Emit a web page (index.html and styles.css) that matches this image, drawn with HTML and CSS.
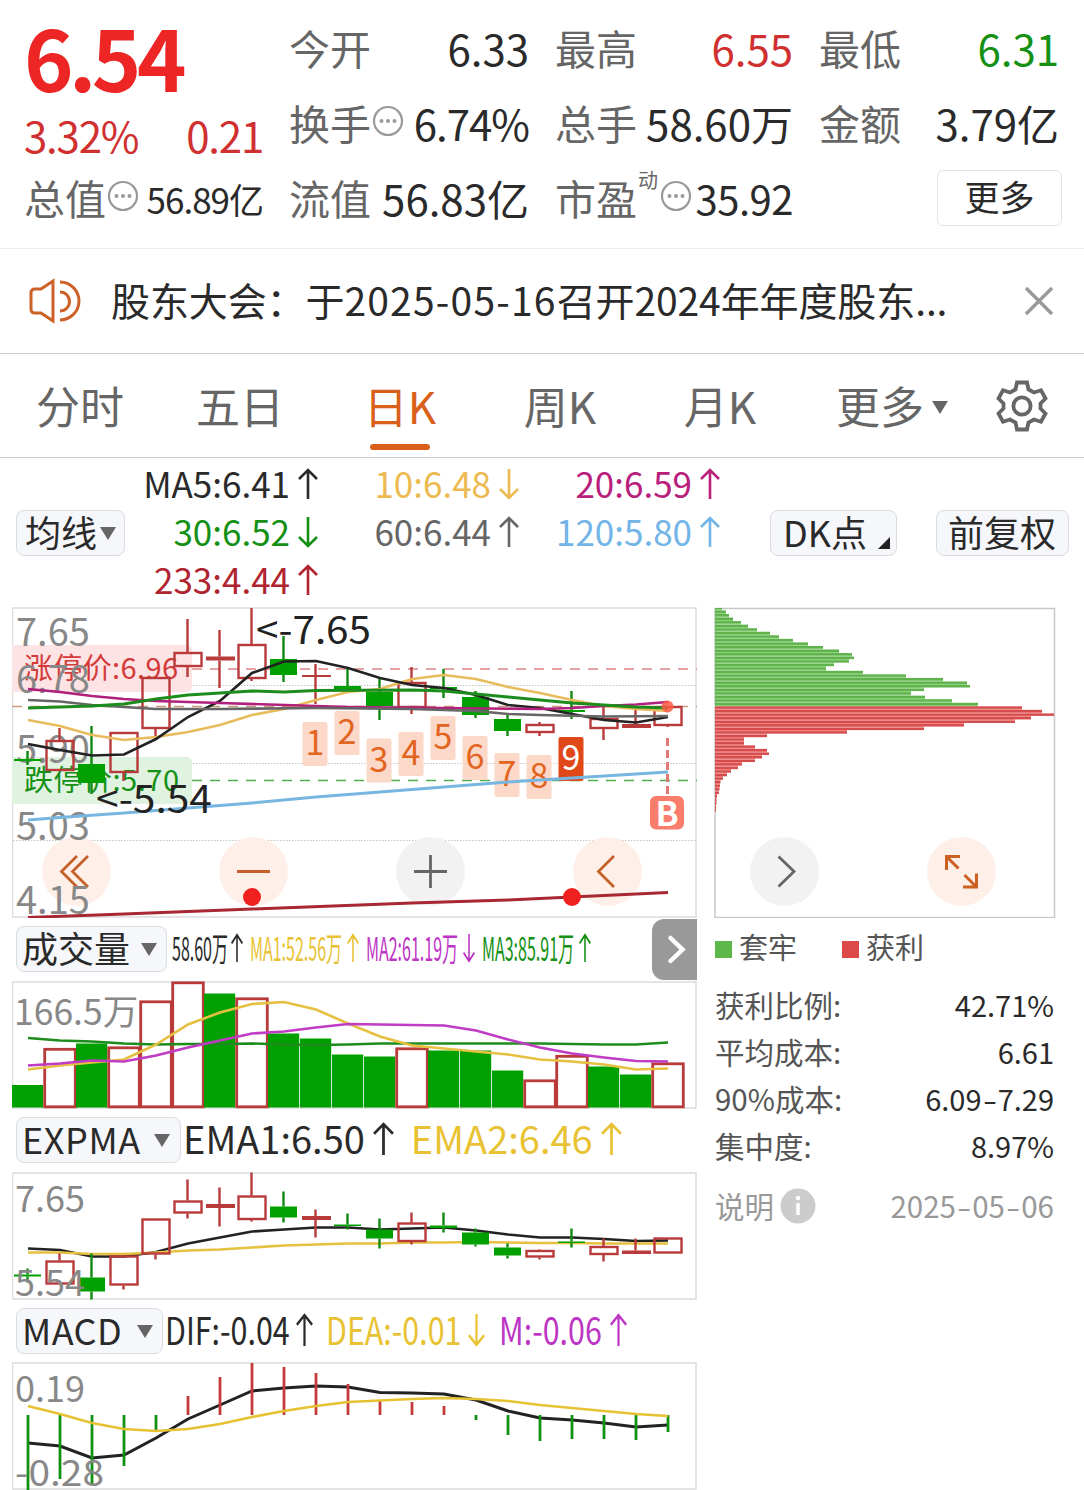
FILE: index.html
```html
<!DOCTYPE html>
<html lang="zh-CN">
<head>
    <meta charset="UTF-8"/>
    <meta name="viewport" content="width=device-width, initial-scale=1.0"/>
    <title>个股行情</title>
    <link rel="stylesheet" href="styles.css">
</head>
<body>
<!--公用图标-->
<svg class="defs">
    <symbol id="dots" viewBox="0 0 32 32">
        <circle cx="16" cy="16" r="14" fill="none" stroke="#999" stroke-width="2.2"/>
        <g fill="#999">
            <circle cx="9.5" cy="16" r="2"/>
            <circle cx="16" cy="16" r="2"/>
            <circle cx="22.5" cy="16" r="2"/>
        </g>
    </symbol>
    <symbol id="up" viewBox="0 0 20 32" preserveAspectRatio="none">
        <path d="M10 31V2M1 11l9-9 9 9" fill="none" stroke="currentColor" stroke-width="2.6"/>
    </symbol>
    <symbol id="down" viewBox="0 0 20 32" preserveAspectRatio="none">
        <path d="M10 1v29M1 21l9 9 9-9" fill="none" stroke="currentColor" stroke-width="2.6"/>
    </symbol>
</svg>

<div class="quote">
    <div class="price">
        <div class="now">6.54</div>
        <div class="change"><span>3.32%</span><span>0.21</span></div>
    </div>
    <div class="item"><label>今开</label><b>6.33</b></div>
    <div class="item"><label>最高</label><b class="red">6.55</b></div>
    <div class="item"><label>最低</label><b class="green">6.31</b></div>
    <div class="item"><label>换手</label><svg class="dots"><use href="#dots"/></svg><b class="rate">6.74%</b></div>
    <div class="item"><label>总手</label><b>58.60万</b></div>
    <div class="item"><label>金额</label><b>3.79亿</b></div>
    <div class="item"><label>总值</label><svg class="dots"><use href="#dots"/></svg><b class="small">56.89亿</b></div>
    <div class="item"><label>流值</label><b>56.83亿</b></div>
    <div class="item"><label>市盈<sup>动</sup></label><svg class="dots pe"><use href="#dots"/></svg><b class="mid">35.92</b></div>
    <div class="item"><a href="javascript:;" class="more">更多</a></div>
</div>

<div class="notice">
    <svg class="horn" viewBox="0 0 52 46">
        <g fill="none" stroke="#cc6228" stroke-width="3">
            <path d="M2 15q0-4 4-4h6L24 3v40L12 35H6q-4 0-4-4z"/>
            <path d="M31 14a9.5 9.5 0 0 1 0 19M31 4a19 19 0 0 1 0 38"/>
        </g>
    </svg>
    <p>股东大会：<span>于<i>2025-05-16</i>召开2024年年度股东...</span></p>
    <svg class="close" viewBox="0 0 30 30">
        <path d="M2 2l26 26M28 2L2 28" stroke="#999" stroke-width="3.4"/>
    </svg>
</div>

<div class="tabs">
    <a>分时</a>
    <a>五日</a>
    <a class="cur">日K</a>
    <a>周K</a>
    <a>月K</a>
    <a class="moreTab">更多<i class="tri"></i></a>
    <svg class="gear" viewBox="0 0 52 52">
        <g fill="none" stroke="#666" stroke-width="3.8">
            <path d="M21 2.500h10l1.500 7 5.500 3 7-2.200 4.500 8.200-5 5v5l5 5-4.500 8.200-7-2.200-5.500 3-1.500 7h-10l-1.500-7-5.500-3-7 2.200-4.500-8.200 5-5v-5l-5-5 4.500-8.200 7 2.200 5.500-3z"/>
            <circle cx="26" cy="26" r="8.6"/>
        </g>
    </svg>
</div>

<div class="average">
    <a class="btn">均线<i class="tri"></i></a>
    <div class="mas">
        <span class="c5">MA5:6.41<svg><use href="#up"/></svg></span>
        <span class="c10">10:6.48<svg><use href="#down"/></svg></span>
        <span class="c20">20:6.59<svg><use href="#up"/></svg></span>
        <span class="c30">30:6.52<svg><use href="#down"/></svg></span>
        <span class="c60">60:6.44<svg><use href="#up"/></svg></span>
        <span class="c120">120:5.80<svg><use href="#up"/></svg></span>
        <span class="c233">233:4.44<svg><use href="#up"/></svg></span>
    </div>
    <a class="btn dk">DK点<i class="corner"></i></a>
    <a class="btn">前复权</a>
</div>

<div class="main">
    <div class="left">
        <svg class="chart kline" viewBox="12 607 685 311">
            <rect x="12.5" y="608" width="683.5" height="309" class="frame"/>
            <path d="M13 685.5H696M13 763.5H696M13 840.5H696" class="dotted"/>
            <path d="M12 645H186q6 0 6 6V686q0 6-6 6H12z" fill="#fde3e3"/>
            <path d="M12 757H186q6 0 6 6V798q0 6-6 6H12z" fill="#e0f2e0"/>
            <path d="M192 669H697" class="dash" stroke="#e08585"/>
            <path d="M12 706.5H697" class="dash" stroke="#c99a7c"/>
            <path d="M192 780.5H697" class="dash" stroke="#4fae4f"/>
            <g fill="#fef0e8">
                <circle cx="76.5" cy="871.5" r="34.5"/>
                <circle cx="253.5" cy="871.5" r="34.5"/>
                <circle cx="430.5" cy="871.5" r="34.5" fill="#f2f2f2"/>
                <circle cx="607.5" cy="871.5" r="34.5"/>
            </g>
            <g fill="none" stroke="#c5602a" stroke-width="2.8">
                <path d="M77 856L61.500 871.500L77 887M88 856L72.500 871.500L88 887"/>
                <path d="M237 871.500H270M614 856L598.500 871.500L614 887"/>
                <path d="M414 871.500H447M430.500 855V888" stroke="#666"/>
            </g>
            <text x="24" y="679" class="limit" fill="#d43a3a" textLength="154">涨停价:6.96</text>
            <text x="24" y="791" class="limit" fill="#149014" textLength="155">跌停价:5.70</text>
            <g class="axis">
                <text x="16" y="646">7.65</text>
                <text x="16" y="692.500">6.78</text>
                <text x="16" y="763">5.90</text>
                <text x="16" y="840">5.03</text>
                <text x="16" y="914">4.15</text>
            </g>
            <g id="kCandles"></g>
            <g id="kTags"></g>
            <g id="kLines"></g>
            <text x="256" y="644" class="mark" textLength="115" lengthAdjust="spacingAndGlyphs">&lt;-7.65</text>
            <text x="96" y="813" class="mark" textLength="116" lengthAdjust="spacingAndGlyphs">&lt;-5.54</text>
            <circle cx="252" cy="897" r="9" fill="#f02020"/>
            <circle cx="572" cy="897" r="9" fill="#f02020"/>
            <circle cx="667.500" cy="706.500" r="6" fill="#fb5a48" opacity=".85"/>
            <path d="M667.500 738V795" stroke="#e07a78" stroke-width="3" stroke-dasharray="8 4"/>
            <rect x="650" y="796" width="34" height="33.500" rx="6" fill="#f97c6c"/>
            <text x="667" y="825.500" class="buy">B</text>
        </svg>

        <div class="legend vol">
            <a class="btn">成交量<i class="tri"></i></a>
            <span class="w1"><em>58.60万</em><svg><use href="#up"/></svg></span>
            <span class="w2 yellow"><em>MA1:52.56万</em><svg><use href="#up"/></svg></span>
            <span class="w2 purple"><em>MA2:61.19万</em><svg><use href="#down"/></svg></span>
            <span class="w2 green"><em>MA3:85.91万</em><svg><use href="#up"/></svg></span>
            <a class="next">
                <svg viewBox="0 0 45 61"><path d="M18.500 19l12 11.500-12 11.500" fill="none" stroke="#fff" stroke-width="4.500" stroke-linecap="round"/></svg>
            </a>
        </div>
        <svg class="chart sub" viewBox="12 980.500 685 128">
            <rect x="12.500" y="981.500" width="683.500" height="126" class="frame"/>
            <text x="14" y="1024" class="axis sm">166.5万</text>
            <g id="vBars"></g>
            <g id="vLines"></g>
        </svg>

        <div class="legend exp">
            <a class="btn">EXPMA<i class="tri"></i></a>
            <span class="black">EMA1:6.50<svg><use href="#up"/></svg></span>
            <span class="yellow">EMA2:6.46<svg><use href="#up"/></svg></span>
        </div>
        <svg class="chart sub" viewBox="12 1171.500 685 128">
            <rect x="12.500" y="1172.500" width="683.500" height="126" class="frame"/>
            <g id="eLines"></g>
            <g id="eCandles"></g>
            <g class="axis md">
                <text x="15" y="1211">7.65</text>
                <text x="15" y="1295">5.54</text>
            </g>
        </svg>

        <div class="legend macd">
            <a class="btn">MACD<i class="tri"></i></a>
            <span class="m1"><em>DIF:-0.04</em><svg><use href="#up"/></svg></span>
            <span class="m2 yellow"><em>DEA:-0.01</em><svg><use href="#down"/></svg></span>
            <span class="m3 purple"><em>M:-0.06</em><svg><use href="#up"/></svg></span>
        </div>
        <svg class="chart sub" viewBox="12 1362 685 128">
            <rect x="12.500" y="1363" width="683.500" height="126" class="frame"/>
            <g id="mLines"></g>
            <g id="mBars"></g>
            <g class="axis md">
                <text x="15" y="1402">0.19</text>
                <text x="15" y="1486" textLength="89" lengthAdjust="spacingAndGlyphs">-0.28</text>
            </g>
        </svg>
    </div>

    <div class="right">
        <svg class="chart chips" viewBox="714 607 342 311">
            <rect x="715" y="608.500" width="339.500" height="309" fill="none" stroke="#c8c8c8" stroke-width="1.500"/>
            <g id="chips"></g>
            <circle cx="784.500" cy="871.500" r="34.500" fill="#f2f2f2"/>
            <circle cx="961.500" cy="871.500" r="34.500" fill="#fef0e8"/>
            <path d="M778.500 856.500l15.500 15-15.500 15" fill="none" stroke="#666" stroke-width="2.800"/>
            <path d="M960 856.500H946.500V870M946.500 856.500l12 12M963 887H976.500V873.500M976.500 887l-12-12" fill="none" stroke="#cc6020" stroke-width="3"/>
        </svg>
        <div class="kinds">
            <span><i></i>套牢</span>
            <span><i class="win"></i>获利</span>
        </div>
        <ul class="stats">
            <li>获利比例:<b>42.71%</b></li>
            <li>平均成本:<b>6.61</b></li>
            <li>90%成本:<b>6.09<s>-</s>7.29</b></li>
            <li>集中度:<b>8.97%</b></li>
        </ul>
        <div class="explain">
            说明
            <svg viewBox="0 0 36 36">
                <circle cx="18" cy="18" r="17.500" fill="#ccc"/>
                <path d="M18 15v12" stroke="#fff" stroke-width="3.500"/>
                <circle cx="18" cy="10" r="2.300" fill="#fff"/>
            </svg>
            <span>2025<s>-</s>05<s>-</s>06</span>
        </div>
    </div>
</div>

<script src="chart.js"></script>
</body>
</html>
```
FILE: styles.css
```css
* {
    margin: 0;
    padding: 0;
    box-sizing: border-box;
}

body {
    width: 1084px;
    height: 1490px;
    overflow: hidden;
    background: #fff;
    color: #2a2a2a;
    font-family: "Noto Sans CJK SC", "Noto Sans", sans-serif;
}

ul {
    list-style: none;
}

b, i, em {
    font-weight: normal;
    font-style: normal;
}

s {
    display: inline-block;
    text-decoration: none;
    transform: scaleX(1.4);
    margin: 0 3px;
}

.defs {
    display: none;
}

.red {
    color: #d03030;
}

.green {
    color: #149014;
}

.yellow {
    color: #e8c232;
}

.purple {
    color: #bd35c4;
}

/* 顶部报价 */
.quote {
    display: grid;
    grid-template-columns: 239px 240px 238px 240px;
    grid-template-rows: repeat(3, 75px);
    column-gap: 26px;
    height: 249px;
    padding: 9px 26px 0 24px;
    border-bottom: 1px solid #ececec;
}

.price {
    grid-row: span 2;
}

.now {
    height: 91px;
    line-height: 93px;
    font-size: 84px;
    font-weight: bold;
    letter-spacing: -4.5px;
    color: #ee2525;
}

.change {
    display: flex;
    justify-content: space-between;
    line-height: 69px;
    font-size: 42px;
    letter-spacing: -1.2px;
    color: #d03030;
}

.item {
    display: flex;
    align-items: center;
    height: 75px;
    font-size: 42px;
    white-space: nowrap;
}

.item label {
    color: #666;
    font-size: 41px;
    position: relative;
}

.item sup {
    position: absolute;
    left: 83px;
    top: 3px;
    font-size: 20px;
    line-height: 20px;
}

.item b {
    margin-left: auto;
    padding-top: 1px;
}

.item .rate {
    letter-spacing: -1px;
}

.item .mid {
    font-size: 40px;
    letter-spacing: -.5px;
    padding: 2px 0 0;
}

.item .small {
    font-size: 35px;
    letter-spacing: -1px;
    padding-top: 3px;
}

.dots {
    width: 32px;
    height: 32px;
    margin: 0 0 2px 1px;
    flex: none;
}

.dots.pe {
    margin-left: 23px;
}

.more {
    width: 125px;
    height: 56px;
    margin: 3px -3px 0 auto;
    border: 1.5px solid #e2e2e2;
    border-radius: 6px;
    text-align: center;
    text-decoration: none;
    color: #2a2a2a;
    line-height: 50px;
    font-size: 35px;
}

/* 公告 */
.notice {
    display: flex;
    align-items: center;
    height: 105px;
    padding: 0 30px 0 29px;
    border-bottom: 1px solid #ccc;
}

.horn {
    width: 52px;
    height: 46px;
}

.notice p {
    width: 860px;
    margin-left: 30px;
    padding-bottom: 4px;
    font-size: 39px;
    letter-spacing: -.1px;
    white-space: nowrap;
}

.notice p i {
    letter-spacing: 1.2px;
}

.close {
    width: 30px;
    height: 30px;
    margin-left: auto;
}

/* 周期切换 */
.tabs {
    display: flex;
    align-items: center;
    height: 104px;
    border-bottom: 1px solid #ccc;
    font-size: 44px;
    color: #666;
}

.tabs a {
    position: relative;
    width: 160px;
    height: 102px;
    line-height: 100px;
    text-align: center;
}

.tabs .cur {
    color: #d9601a;
}

.tabs .cur::after {
    content: "";
    position: absolute;
    left: 50px;
    bottom: 7px;
    width: 60px;
    height: 6px;
    border-radius: 3px;
    background: #d9601a;
}

.tabs .moreTab {
    width: 184px;
}

.tri {
    display: inline-block;
    border: 8px solid transparent;
    border-top: 13px solid #666;
    border-bottom: 0;
    margin-left: 8px;
    vertical-align: 10px;
}

.gear {
    width: 52px;
    height: 52px;
    margin-left: 12px;
}

/* 均线 */
.average {
    display: flex;
    align-items: center;
    height: 149px;
    padding: 0 16px;
}

.btn {
    flex: none;
    height: 46px;
    border: 1px solid #d9dce0;
    border-radius: 8px;
    background: #f6f7fa;
    line-height: 40px;
    font-size: 36px;
    white-space: nowrap;
}

.average .btn {
    width: 109px;
    padding-left: 8px;
}

.average .btn:last-child {
    width: 133px;
    padding-left: 11px;
    margin-left: 39px;
}

.btn .tri {
    margin-left: 3px;
    vertical-align: 7px;
}

.average .dk {
    position: relative;
    width: 127px;
    padding-left: 12px;
    margin-left: 50px;
}

.corner {
    position: absolute;
    right: 6px;
    bottom: 6px;
    border: 6px solid #222;
    border-top-color: transparent;
    border-left-color: transparent;
}

.mas {
    display: grid;
    grid-template-columns: 193px 201px 201px;
    grid-auto-rows: 48px;
    padding-bottom: 4px;
}

.mas span {
    display: flex;
    align-items: center;
    justify-content: flex-end;
    font-size: 35px;
    line-height: 48px;
}

.mas svg {
    width: 20px;
    height: 32px;
    margin: 2px 0 0 8px;
}

.c10 {
    color: #ecba50;
}

.c20 {
    color: #b8207c;
}

.c30 {
    color: #149014;
}

.c60 {
    color: #666;
}

.c120 {
    color: #72b5e6;
}

.c233 {
    color: #b02430;
}

/* 图表区 */
.main {
    display: flex;
    gap: 17px;
    padding-left: 12px;
}

.left {
    width: 685px;
}

.chart {
    display: block;
    width: 685px;
}

.kline, .chips {
    height: 311px;
}

.chips {
    width: 342px;
}

.sub {
    height: 128px;
}

.frame {
    fill: none;
    stroke: #dedede;
    stroke-width: 1.6;
}

.dotted {
    stroke: #c4c4c4;
    stroke-dasharray: 1.5 1.5;
}

.dash {
    stroke-width: 1.5;
    stroke-dasharray: 10 8;
}

.limit {
    font-size: 29px;
}

.axis {
    font-size: 38px;
    fill: #888;
}

.axis.md {
    font-size: 36px;
}

.axis.sm {
    font-size: 35.5px;
}

.mark {
    font-size: 38px;
    fill: #222;
}

.buy {
    font-size: 34px;
    font-weight: bold;
    fill: #fff;
    text-anchor: middle;
}

.tag {
    font-size: 34px;
    fill: #e2641e;
    text-anchor: middle;
}

.legend {
    display: flex;
    align-items: center;
    padding-left: 4px;
}

.legend span {
    display: flex;
    align-items: center;
    flex: none;
    height: 46px;
    font-size: 38px;
    line-height: 40px;
    padding-bottom: 4px;
}

.legend em {
    flex: none;
    transform-origin: left;
    white-space: nowrap;
}

.legend svg {
    width: 20px;
    height: 34px;
    margin: 2px 0 0 auto;
}

.vol {
    height: 62.5px;
}

.vol .btn {
    width: 151px;
    padding-left: 5px;
}

.vol .btn .tri {
    margin-left: 11px;
}

.vol span {
    font-size: 33px;
}

.vol span em {
    width: 0;
    transform: scaleX(.485);
}

.vol span svg {
    width: 12px;
    height: 30px;
}

.vol .w1 {
    width: 71px;
    margin-left: 5px;
    margin-right: 7px;
}

.vol .w2 {
    width: 109px;
    margin-right: 7px;
}

.vol .next {
    width: 45px;
    height: 61px;
    margin-left: auto;
    border-radius: 12px 0 0 12px;
    background: #999;
}

.vol .next svg {
    display: block;
    width: 45px;
    height: 61px;
    margin: 0;
}

.exp {
    height: 63px;
}

.exp .btn {
    width: 165px;
    padding-left: 5px;
    letter-spacing: .6px;
}

.exp .btn .tri {
    margin-left: 13px;
}

.exp span {
    margin-left: 2px;
    margin-right: 15px;
}

.exp span svg {
    width: 21px;
    margin-left: 8px;
}

.macd {
    height: 62.5px;
}

.macd .btn {
    width: 147px;
    padding-left: 5px;
    letter-spacing: .4px;
}

.macd .btn .tri {
    margin-left: 15px;
}

.macd span em {
    width: 0;
    transform: scaleX(.8);
}

.macd .m1 {
    width: 148px;
    margin-left: 2px;
    margin-right: 13px;
}

.macd .m2 {
    width: 159px;
    margin-right: 14px;
}

.macd .m3 {
    width: 128px;
}

.macd span svg {
    width: 17px;
}

/* 筹码分布 */
.right {
    width: 342px;
}

.kinds {
    display: flex;
    gap: 44px;
    height: 62px;
    line-height: 56px;
    font-size: 29px;
    color: #555;
}

.kinds i {
    display: inline-block;
    width: 17px;
    height: 17px;
    margin: 0 7px 0 1px;
    vertical-align: 1px;
    background: #5cb648;
}

.kinds .win {
    background: #dd4848;
}

.stats li {
    display: flex;
    justify-content: space-between;
    height: 47px;
    line-height: 49px;
    padding: 0 2px 0 1px;
    font-size: 29.5px;
    color: #555;
}

.stats b {
    color: #2a2a2a;
    font-size: 29px;
}

.explain {
    display: flex;
    align-items: center;
    height: 64px;
    margin-top: 5px;
    padding: 0 2px 0 1px;
    font-size: 29.5px;
    color: #999;
}

.explain svg {
    width: 36px;
    height: 36px;
    margin: 2px auto 0 6px;
}
```
FILE: chart.js
```js
const RED = "#b83a3a"
const GREEN = "#00a000"
const WICK = "#108a10"

// 第i根K线的中心横坐标
function cx(i) {
    return 28 + 32 * i
}

function put(id, html) {
    document.getElementById(id).innerHTML += html
}

// points: [序号, y, 序号, y ...]
function line(id, color, points, width) {
    let d = ""
    for (let i = 0; i < points.length; i += 2) {
        d += (i ? "L" : "M") + cx(points[i]) + " " + points[i + 1]
    }
    put(id, `<path d="${d}" fill="none" stroke="${color}" stroke-width="${width || 2.6}"/>`)
}

function series(id, color, ys, width) {
    line(id, color, ys.flatMap((y, i) => [i, y]), width)
}

// 每根: [类型, 实体上, 实体下, 影线上, 影线下] r空心 f实心红 g绿
function candles(id, list) {
    list.forEach(([type, top, bottom, high, low], i) => {
        let x = cx(i)
        let color = type === "g" ? WICK : RED
        put(id, `<path d="M${x - 0.5} ${high}V${top}M${x - 0.5} ${bottom}V${low}" stroke="${color}" stroke-width="2.4"/>`)
        if (type === "r") {
            put(id, `<rect x="${x - 13.5}" y="${top + 1}" width="27" height="${bottom - top - 2}" fill="none" stroke="${RED}" stroke-width="2.4"/>`)
        } else {
            put(id, `<rect x="${x - 14}" y="${top}" width="${type === "g" ? 27 : 29}" height="${bottom - top}" fill="${type === "g" ? GREEN : RED}"/>`)
        }
    })
}

candles("kCandles", [
    ["g", 759, 761, 751, 765], ["r", 740, 771, 728, 771], ["g", 764, 783, 726, 794],
    ["r", 732, 773, 732, 781], ["r", 677, 729, 677, 738], ["r", 652, 667, 619, 677],
    ["f", 656.5, 660.5, 630, 688], ["r", 644, 679, 608, 681], ["g", 659, 675, 636, 682],
    ["f", 675, 677, 664, 704], ["g", 686, 689, 668, 689], ["g", 692, 706, 677, 720],
    ["r", 682, 708, 667, 714], ["g", 687, 689, 669, 698], ["g", 697, 715, 691, 718],
    ["g", 719, 731, 715, 736], ["r", 724, 733, 722, 736], ["g", 710, 712, 691, 719],
    ["r", 718, 729, 706, 740], ["f", 724, 728, 709, 728], ["r", 706, 726, 706, 727]
])

// 九转序列
;[722, 711, 738.5, 732, 716, 736, 753, 755, 737].forEach((y, k) => {
    let x = 315 + 32 * k
    let last = k === 8
    put("kTags", `<rect x="${x - 12.5}" y="${y}" width="25" height="44" rx="2" fill="${last ? "#e04818" : "#fcd8c8"}"/>
        <text x="${x}" y="${y + 33}" class="tag"${last ? ' style="fill:#fff"' : ""}>${k + 1}</text>`)
})

line("kLines", "#a82832", [0, 917.5, 3, 914, 7, 909, 12, 903, 15, 900, 20, 892.5], 3)
line("kLines", "#78b6e2", [0, 820, 1, 817.5, 3, 813, 5, 808, 7, 803, 9, 797, 11, 792, 13, 787, 15, 782, 17, 778, 19, 774, 20, 772], 3)
series("kLines", "#e8bc5c", [720, 726, 735, 740, 737, 732, 725, 715, 709, 700, 692, 689, 679, 675, 679, 687, 693, 700, 706, 709, 711])
series("kLines", "#222", [744, 750, 755.5, 754.5, 739, 717, 701, 673, 661.5, 661, 668, 678, 685, 688, 695, 705, 708, 714, 720, 722.5, 717])
line("kLines", "#b0207c", [0, 689, 1, 692, 2, 696, 3, 699, 4, 701, 6, 703, 9, 706, 10, 707, 13, 708, 16, 709, 17, 708, 18, 706, 19, 704.5, 20, 702])
line("kLines", "#666", [0, 700, 1, 701.5, 2, 705, 3, 707, 4, 709, 6, 709, 9, 708, 12, 709, 14, 711, 15, 714, 16, 715, 18, 716.5, 20, 716])
line("kLines", "#1c8c1c", [0, 708, 1, 707, 2, 706, 3, 704, 4, 699, 5, 695, 6, 693, 7, 691, 8, 692, 9, 690.5, 12, 690, 13, 691, 14, 694, 15, 697, 16, 700, 17, 703, 18, 705, 19, 707, 20, 708], 3)

// 成交量, 负数为阴线
;[-1084.5, 1047.5, -1043, 1046, 1000, 981, -993, 997, -1033, -1038, -1054, -1056, 1047, -1050, -1050, -1070, 1079, 1054.5, -1066, -1074, 1062].forEach((v, i) => {
    let y = Math.abs(v)
    if (v < 0) {
        put("vBars", `<rect x="${12 + 32 * i}" y="${y}" width="31.2" height="${1107 - y}" fill="${GREEN}"/>`)
    } else {
        put("vBars", `<rect x="${12.7 + 32 * i}" y="${y + 1.3}" width="30.6" height="${1105 - y}" fill="none" stroke="${RED}" stroke-width="2.8"/>`)
    }
})
series("vLines", "#1c8c1c", [1037.5, 1040, 1041, 1043, 1044, 1043.5, 1043.5, 1043, 1044, 1044.5, 1044, 1043, 1043, 1043, 1043, 1043, 1043, 1043.5, 1044, 1044, 1042])
series("vLines", "#e6c040", [1069, 1065, 1062, 1059, 1044, 1024, 1012, 1003.5, 1001.5, 1009, 1023, 1036, 1045, 1048, 1051, 1054, 1059, 1061, 1064, 1069, 1068])
series("vLines", "#c03cc4", [1065, 1063, 1060, 1061, 1055, 1047, 1040, 1033, 1031, 1027, 1023.5, 1024, 1024.5, 1025, 1030, 1039, 1047, 1053, 1057, 1060.5, 1061])

series("eLines", "#222", [1248, 1249.5, 1256, 1256, 1251.5, 1243, 1237, 1231, 1229, 1227, 1227, 1229, 1228, 1227, 1230, 1234, 1237, 1237, 1238.5, 1240.5, 1240])
series("eLines", "#e6c040", [1252, 1252, 1253.5, 1253.5, 1252, 1250, 1249, 1247, 1245, 1244, 1243, 1243, 1242, 1242, 1241.5, 1242, 1242.5, 1242.5, 1243, 1243, 1243])
candles("eCandles", [
    ["g", 1274, 1276, 1268, 1282], ["r", 1260, 1284, 1253, 1284], ["g", 1277, 1291, 1253, 1299],
    ["r", 1255, 1285, 1255, 1289], ["r", 1218, 1254, 1218, 1259], ["r", 1200, 1213, 1179, 1218],
    ["f", 1203.5, 1207.5, 1187, 1226], ["r", 1195, 1219.5, 1172, 1221], ["g", 1206, 1217, 1191, 1222],
    ["f", 1215.5, 1219.5, 1209, 1237], ["g", 1224, 1225.5, 1213, 1229], ["g", 1229, 1238, 1218, 1248],
    ["r", 1222, 1241.5, 1212, 1244], ["g", 1225, 1227.5, 1212, 1232], ["g", 1232, 1244, 1228, 1246],
    ["g", 1247, 1255, 1243, 1258], ["r", 1249.5, 1257, 1249, 1259], ["g", 1241, 1242.5, 1228, 1247],
    ["r", 1245.5, 1254.5, 1238, 1261], ["f", 1250, 1253.5, 1238, 1253], ["r", 1237, 1253, 1237, 1253]
])

series("mLines", "#222", [1443, 1446, 1458, 1455, 1438, 1419, 1405, 1391, 1388, 1386, 1387, 1392.5, 1393, 1394, 1400, 1411, 1418, 1420, 1423, 1427, 1425], 3)
;[1490, 1479, 1484, 1466, 1430, 1396, 1377, 1363, 1367, 1373, 1384, 1400, 1402, 1406, 1420, 1435, 1441, 1439, 1439, 1440, 1432].forEach((y, i) => {
    put("mBars", `<path d="M${cx(i)} 1415V${y}" stroke="${y > 1415 ? "#149014" : "#c23c3c"}" stroke-width="2.8"/>`)
})
series("mBars", "#e6c232", [1406, 1414, 1423, 1429, 1431, 1429, 1424, 1417, 1411, 1406, 1402, 1400.5, 1399, 1398, 1399, 1401, 1405, 1408, 1411, 1414, 1416])

// 筹码, 前28条套牢, 其余获利
let chips = [7, 11, 14, 18, 26, 33, 42, 55, 64, 78, 93, 108, 124, 137, 139, 134, 119, 111, 148, 191, 228, 252, 255, 209, 196, 210, 237, 263,
    307, 327, 339, 316, 300, 249, 209, 132, 52, 29, 29, 40, 52, 54, 47, 40, 27, 23, 16, 12, 8, 5.5, 5, 4.5, 4, 2, 1.5, 1.5, 1, 1]
chips.forEach((w, i) => {
    let y = 606.7 + 3.55 * i
    let up = i < 28
    // 条与条之间的浅色只画到较短的一条
    let gap = Math.min(w, chips[i + 1] || 0)
    put("chips", `<rect x="715" y="${y + 2.5}" width="${gap}" height="1.2" fill="${up ? "#8ed47c" : "#fb8080"}"/>
        <rect x="715" y="${y < 608 ? 608 : y + 0.2}" width="${w}" height="${y < 608 ? 1.3 : 2.5}" fill="${up ? "#5fb24c" : "#d44c4c"}"/>`)
})
```
